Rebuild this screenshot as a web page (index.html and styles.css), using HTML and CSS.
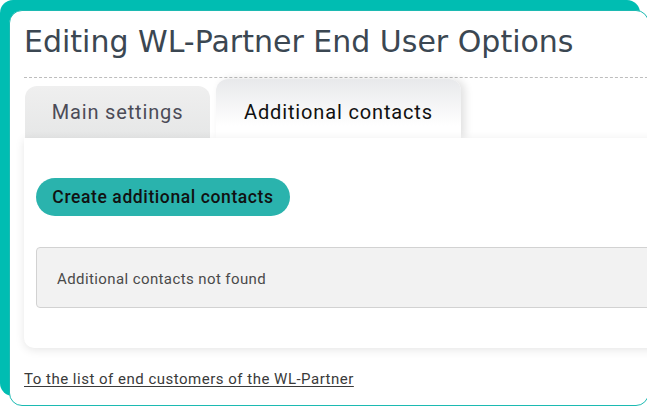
FILE: index.html
```html
<!DOCTYPE html>
<html>
<head>
<meta charset="utf-8">
<link rel="stylesheet" href="styles.css">
</head>
<body>
<div class="card">
  <h1 class="title">Editing WL-Partner End User Options</h1>
  <div class="tabs">
    <div class="tab">Main settings</div>
    <div class="tab active">Additional contacts</div>
  </div>
  <div class="panel">
    <button class="btn">Create additional contacts</button>
    <div class="empty">Additional contacts not found</div>
  </div>
  <a class="back" href="#">To the list of end customers of the WL-Partner</a>
</div>
</body>
</html>
```
FILE: styles.css
```css
html, body {
  margin: 0;
  padding: 0;
  background: #ffffff;
  overflow: hidden;
}
.card {
  box-sizing: border-box;
  margin: 10px 0 0 9px;
  width: 640px;
  height: 396px;
  background: #ffffff;
  border: 1px solid #1cbab2;
  border-radius: 13px;
  box-shadow: -9px -10px 0 0 #00bdb2;
  padding: 0 0 0 14px;
  overflow: hidden;
}
.title {
  margin: 0;
  padding: 12px 0 0 0;
  height: 54px;
  font-family: "DejaVu Sans", sans-serif;
  font-weight: normal;
  font-size: 30px;
  line-height: 38px;
  color: #3b4752;
  border-bottom: 1px dashed #bdbdbd;
  margin-right: -20px;
}
.tabs {
  display: flex;
  align-items: flex-end;
  gap: 6px;
  margin-top: 1px;
  padding-left: 1px;
  height: 59px;
}
.tab {
  box-sizing: border-box;
  height: 52px;
  width: 185px;
  border-radius: 12px 12px 0 0;
  background: linear-gradient(#efefef, #e6e7e7);
  font-family: Roboto, sans-serif;
  font-size: 20px;
  letter-spacing: 0.85px;
  color: #4b4b57;
  display: flex;
  align-items: center;
  justify-content: center;
  padding-bottom: 0;
}
.tab.active {
  height: 59px;
  width: 245px;
  background: linear-gradient(#e8e9eb, #ffffff 80%);
  color: #111111;
  box-shadow: 4px 0 8px rgba(0,0,0,0.12);
  padding-top: 6px;
}
.panel {
  position: relative;
  background: #ffffff;
  margin-right: -20px;
  height: 210px;
  box-sizing: border-box;
  padding: 40px 0 0 12px;
  border-radius: 0 0 0 10px;
  box-shadow: 0 2px 10px rgba(0,0,0,0.10);
}
.btn {
  display: block;
  height: 38px;
  padding: 0;
  width: 254px;
  border: none;
  border-radius: 19px;
  background: #2ab3ad;
  font-family: Roboto, sans-serif;
  font-weight: 500;
  font-size: 17.5px;
  letter-spacing: 0.6px;
  color: #111111;
}
.empty {
  box-sizing: border-box;
  margin-top: 31px;
  height: 61px;
  background: #f2f2f2;
  border: 1px solid #d2d2d2;
  border-radius: 4px;
  padding: 2px 0 0 20px;
  display: flex;
  align-items: center;
  font-family: Roboto, sans-serif;
  font-size: 15px;
  letter-spacing: 0.4px;
  color: #4a4a4a;
}
.back {
  display: inline-block;
  margin-top: 22px;
  font-family: Roboto, sans-serif;
  font-size: 15px;
  letter-spacing: 0.5px;
  color: #3a3a3a;
  text-decoration: underline;
  text-underline-offset: 2px;
}
```
